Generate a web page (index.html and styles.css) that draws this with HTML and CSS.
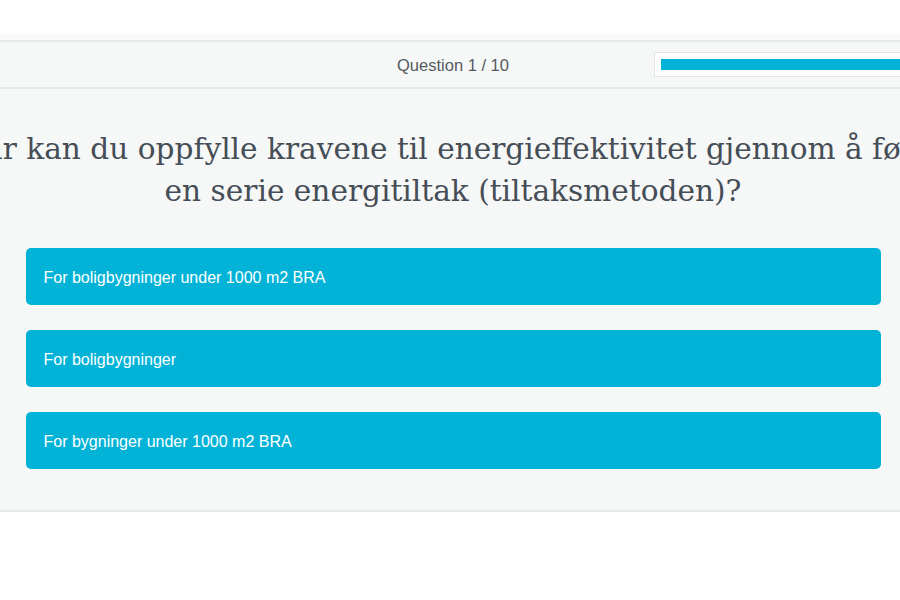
FILE: index.html
```html
<!DOCTYPE html>
<html lang="nb">
  <head>
    <meta charset="UTF-8" />
    <meta name="viewport" content="width=device-width, initial-scale=1.0" />
    <title>Quiz</title>
    <link rel="stylesheet" href="styles.css">
  </head>
  <body>
    <div class="page">
      <div class="quiz">
        <div class="quiz-header">
          <div></div>
          <div class="counter">Question 1 / 10</div>
          <div class="progress-cell">
            <div class="progress">
              <div class="progress-fill"></div>
            </div>
          </div>
        </div>
        <h1 class="question">Når kan du oppfylle kravene til energieffektivitet gjennom å følge<br>en serie energitiltak (tiltaksmetoden)?</h1>
        <div class="answers">
          <button class="answer">For boligbygninger under 1000 m2 BRA</button>
          <button class="answer">For boligbygninger</button>
          <button class="answer">For bygninger under 1000 m2 BRA</button>
        </div>
      </div>
    </div>
  </body>
</html>
```

FILE: styles.css
```css
body {
  margin: 0;
  background-color: #ffffff;
  overflow: hidden;
  font-family: "Liberation Sans", Arial, sans-serif;
}

.page {
  padding-top: 40px;
}

.quiz {
  width: 1000px;
  margin-left: -47px;
  background-color: #f6f7f7;
  border-top: 2px solid #e6e7e7;
  border-bottom: 2px solid #e6e7e7;
  box-shadow: 0 0 0 7px #f9fafa;
}

.quiz-header {
  height: 45px;
  display: grid;
  grid-template-columns: minmax(0, 1fr) auto minmax(0, 1fr);
  align-items: center;
  border-bottom: 2px solid #e8e9e9;
}

.counter {
  font-size: 16.5px;
  color: #555a5e;
  padding-top: 1px;
}

.progress-cell {
  padding-left: 145px;
  overflow: hidden;
}

.progress {
  width: 320px;
  height: 11px;
  padding: 6px;
  background-color: #ffffff;
  border: 1px solid #e3e4e4;
}

.progress-fill {
  width: 100%;
  height: 100%;
  background-color: #02b3d7;
}

.question {
  margin: 39px 0 36px;
  text-align: center;
  white-space: nowrap;
  font-family: "DejaVu Serif", Georgia, serif;
  font-weight: normal;
  font-size: 29.6px;
  line-height: 42px;
  color: #454d56;
}

.answers {
  width: 855px;
  margin: 0 auto;
  padding-bottom: 41px;
  display: flex;
  flex-direction: column;
  gap: 25px;
}

.answer {
  height: 57px;
  padding: 2px 0 0 18px;
  border: none;
  border-radius: 5px;
  background-color: #02b3d7;
  color: #ffffff;
  text-align: left;
  font-family: "Liberation Sans", Arial, sans-serif;
  font-size: 16px;
  cursor: pointer;
}
```
